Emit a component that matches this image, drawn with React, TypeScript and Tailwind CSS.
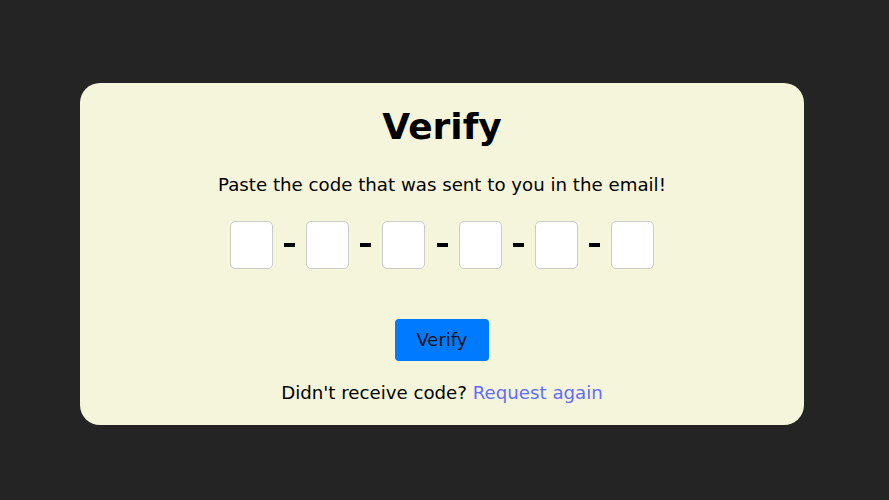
export default function App() {
  const boxes = [0, 1, 2, 3, 4, 5]

  return (
    <div
      className="min-h-[500px] w-full bg-[#242424] flex pl-[80px] pt-[83px]"
      style={{ fontFamily: '"DejaVu Sans", sans-serif' }}
    >
      <div className="w-[724px] h-[342px] rounded-[20px] bg-[#f5f5dc] flex flex-col items-center pt-[22px]">
        <h1 className="text-[36px] leading-[43px] font-bold text-black">Verify</h1>
        <p className="mt-[25px] text-[18.2px] leading-[24px] text-black">
          Paste the code that was sent to you in the email!
        </p>
        <div className="mt-[24px] flex items-center">
          {boxes.map((i) => (
            <div key={i} className="flex items-center">
              {i > 0 && (
                <span className="w-[33.2px] flex justify-center">
                  <span className="block w-[11px] h-[4px] bg-black" />
                </span>
              )}
              <input
                type="text"
                maxLength={1}
                className="w-[43px] h-[48px] rounded-[5px] border border-[#cccccc] bg-white text-center outline-none"
              />
            </div>
          ))}
        </div>
        <button className="mt-[50px] w-[94px] h-[42px] rounded-[4px] bg-[#007bff] text-[18px] text-[#111] leading-none">
          Verify
        </button>
        <p className="mt-[20px] text-[18.2px] leading-[24px] text-black">
          Didn't receive code?{' '}
          <a href="#" className="text-[#646cff]">Request again</a>
        </p>
      </div>
    </div>
  )
}
